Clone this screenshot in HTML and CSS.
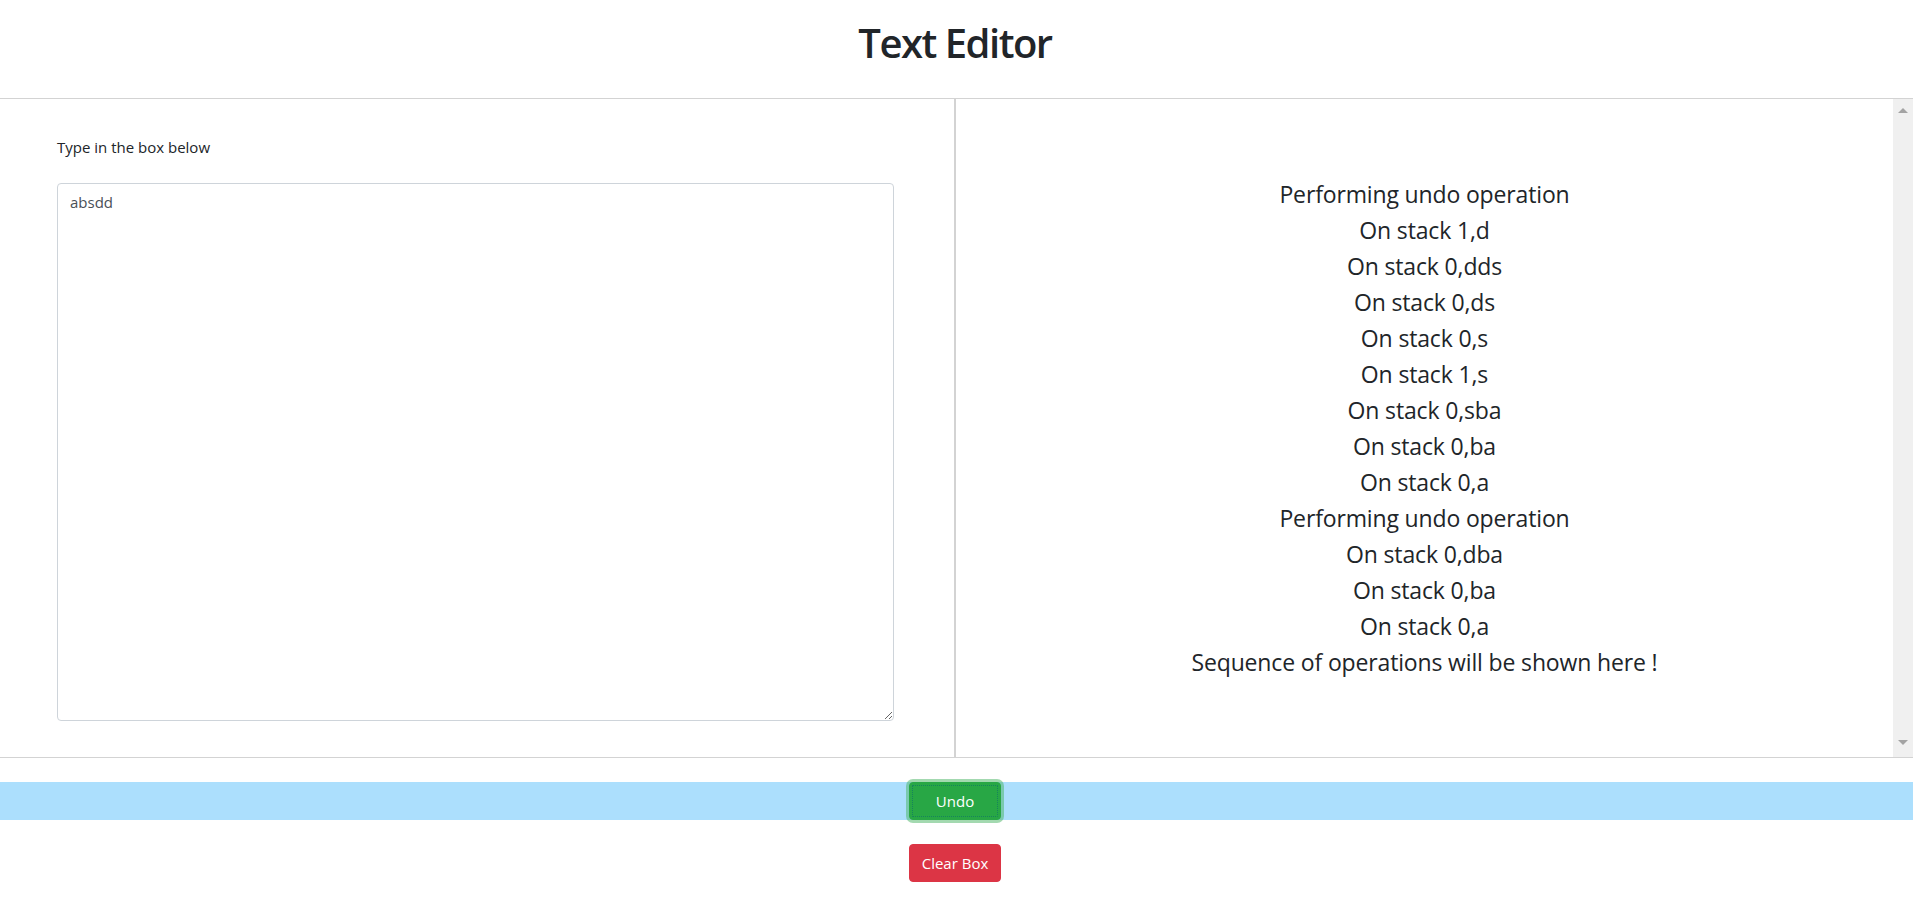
FILE: index.html
```html
<!DOCTYPE html>
<html lang="en">
<head>
<meta charset="utf-8">
<title>Text Editor</title>
<link rel="stylesheet" href="styles.css">
</head>
<body>
<header class="page-header">
  <h1 class="title">Text Editor</h1>
</header>
<main class="workspace">
  <section class="editor-pane">
    <p class="prompt">Type in the box below</p>
    <textarea class="editor" spellcheck="false">absdd</textarea>
  </section>
  <section class="log-pane">
    <div class="log-view">
      <div class="log-list">
        <p class="log-line">Performing undo operation</p>
        <p class="log-line">On stack 1,d</p>
        <p class="log-line">On stack 0,dds</p>
        <p class="log-line">On stack 0,ds</p>
        <p class="log-line">On stack 0,s</p>
        <p class="log-line">On stack 1,s</p>
        <p class="log-line">On stack 0,sba</p>
        <p class="log-line">On stack 0,ba</p>
        <p class="log-line">On stack 0,a</p>
        <p class="log-line">Performing undo operation</p>
        <p class="log-line">On stack 0,dba</p>
        <p class="log-line">On stack 0,ba</p>
        <p class="log-line">On stack 0,a</p>
        <p class="log-line">Sequence of operations will be shown here !</p>
      </div>
    </div>
    <div class="scrollbar">
      <span class="arrow arrow-up"></span>
      <span class="arrow arrow-down"></span>
    </div>
  </section>
</main>
<div class="undo-band">
  <button class="btn btn-success btn-focus" type="button">Undo</button>
</div>
<div class="clear-row">
  <button class="btn btn-danger" type="button">Clear Box</button>
</div>
</body>
</html>
```

FILE: styles.css
```css
* {
  box-sizing: border-box;
}

html, body {
  margin: 0;
  padding: 0;
  background: #ffffff;
}

body {
  font-family: "Open Sans", "Noto Sans", "Liberation Sans", sans-serif;
  font-size: 16px;
  line-height: 1.5;
  color: #212529;
  width: 1913px;
}

.page-header {
  height: 98px;
  padding: 19px 3px 0 0;
  display: flex;
  justify-content: center;
}

.title {
  margin: 0;
  font-size: 40px;
  font-weight: 600;
  line-height: 1.2;
  letter-spacing: -1.5px;
  color: #212529;
}

.workspace {
  display: flex;
  height: 660px;
  border-top: 1px solid #d3d3d3;
  border-bottom: 1px solid #d3d3d3;
}

.editor-pane {
  width: 955px;
  border-right: 1px solid #d3d3d3;
  padding: 36px 0 0 57px;
  display: flex;
  flex-direction: column;
}

.prompt {
  margin: 0 0 24px;
  font-size: 15px;
  line-height: 24px;
  color: #212529;
}

.editor {
  width: 837px;
  height: 538px;
  padding: 6px 12px;
  border: 1px solid #ced4da;
  border-radius: 4px;
  font-family: "Open Sans", "Noto Sans", "Liberation Sans", sans-serif;
  font-size: 15px;
  line-height: 24px;
  color: #495057;
  background: #fff;
  resize: both;
  outline: none;
}

.log-pane {
  flex: 1;
  display: flex;
  border-left: 1px solid #d3d3d3;
}

.log-view {
  flex: 1;
  display: flex;
  align-items: center;
  justify-content: center;
}

.log-list {
  text-align: center;
}

.log-line {
  margin: 0;
  font-size: 23px;
  line-height: 36px;
  letter-spacing: -0.15px;
  color: #212529;
}

.scrollbar {
  width: 20px;
  background: #f0f0f0;
  display: flex;
  flex-direction: column;
  justify-content: space-between;
  align-items: center;
  padding: 9px 0 12px;
}

.arrow {
  width: 0;
  height: 0;
  border-left: 5px solid transparent;
  border-right: 5px solid transparent;
}

.arrow-up {
  border-bottom: 5px solid #a3a3a3;
}

.arrow-down {
  border-top: 5px solid #a3a3a3;
}

.undo-band {
  margin-top: 24px;
  height: 38px;
  padding-right: 3px;
  background: #acdffd;
  display: flex;
  justify-content: center;
}

.clear-row {
  margin-top: 24px;
  padding-right: 3px;
  display: flex;
  justify-content: center;
}

.btn {
  width: 92px;
  height: 38px;
  padding: 0;
  border: 1px solid transparent;
  border-radius: 4px;
  font-family: "Open Sans", "Noto Sans", "Liberation Sans", sans-serif;
  font-size: 15px;
  line-height: 24px;
  color: #ffffff;
  cursor: pointer;
}

.btn-success {
  background: #28a745;
  border-color: #28a745;
}

.btn-focus {
  box-shadow: 0 0 0 3px rgba(72, 180, 97, 0.5);
  outline: 1px dotted rgba(0, 90, 120, 0.45);
  outline-offset: -4px;
}

.btn-danger {
  background: #dc3545;
  border-color: #dc3545;
}
```
